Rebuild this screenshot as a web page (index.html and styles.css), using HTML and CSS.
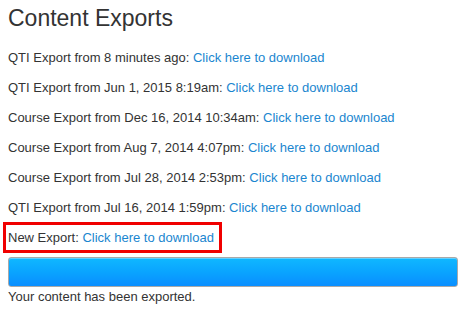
FILE: index.html
```html
<!DOCTYPE html>
<html>
<head>
<meta charset="utf-8">
<link rel="stylesheet" href="styles.css">
</head>
<body>
<div class="page">
  <h1 class="title">Content Exports</h1>
  <div class="exports">
    <p class="row">QTI Export from 8 minutes ago: <a href="#" class="link">Click here to download</a></p>
    <p class="row">QTI Export from Jun 1, 2015 8:19am: <a href="#" class="link">Click here to download</a></p>
    <p class="row">Course Export from Dec 16, 2014 10:34am: <a href="#" class="link">Click here to download</a></p>
    <p class="row">Course Export from Aug 7, 2014 4:07pm: <a href="#" class="link">Click here to download</a></p>
    <p class="row">Course Export from Jul 28, 2014 2:53pm: <a href="#" class="link">Click here to download</a></p>
    <p class="row">QTI Export from Jul 16, 2014 1:59pm: <a href="#" class="link">Click here to download</a></p>
  </div>
  <p class="row new-export">New Export: <a href="#" class="link">Click here to download</a></p>
  <div class="progress"></div>
  <p class="status">Your content has been exported.</p>
</div>
</body>
</html>
```
FILE: styles.css
```css
html, body {
  margin: 0;
  padding: 0;
  background: #ffffff;
}
body {
  font-family: "Liberation Sans", Arial, sans-serif;
  color: #333333;
}
.page {
  padding: 4px 6px 0 8px;
  display: flex;
  flex-direction: column;
  align-items: flex-start;
}
.title {
  margin: 0;
  font-size: 23px;
  line-height: 28px;
  font-weight: normal;
  color: #333333;
}
.exports {
  margin-top: 18px;
  display: flex;
  flex-direction: column;
  gap: 14px;
}
.row {
  margin: 0;
  font-size: 13px;
  line-height: 16px;
  white-space: nowrap;
}
.link {
  color: #1a86cf;
  text-decoration: none;
}
.new-export {
  margin-top: 6px;
  margin-left: -5px;
  padding: 5px 5px 4px 2px;
  border: 3px solid #f00000;
}
.progress {
  margin-top: 4px;
  width: 450px;
  height: 30px;
  box-sizing: border-box;
  border: 1px solid #a9a9a9;
  border-radius: 3px;
  background: linear-gradient(to bottom, #10b8ff 0%, #0aa4ff 50%, #0a8eff 100%);
  box-shadow: inset 0 1px 0 rgba(255,255,255,0.35);
}
.status {
  margin: 2px 0 0 0;
  font-size: 13px;
  line-height: 16px;
}
```
